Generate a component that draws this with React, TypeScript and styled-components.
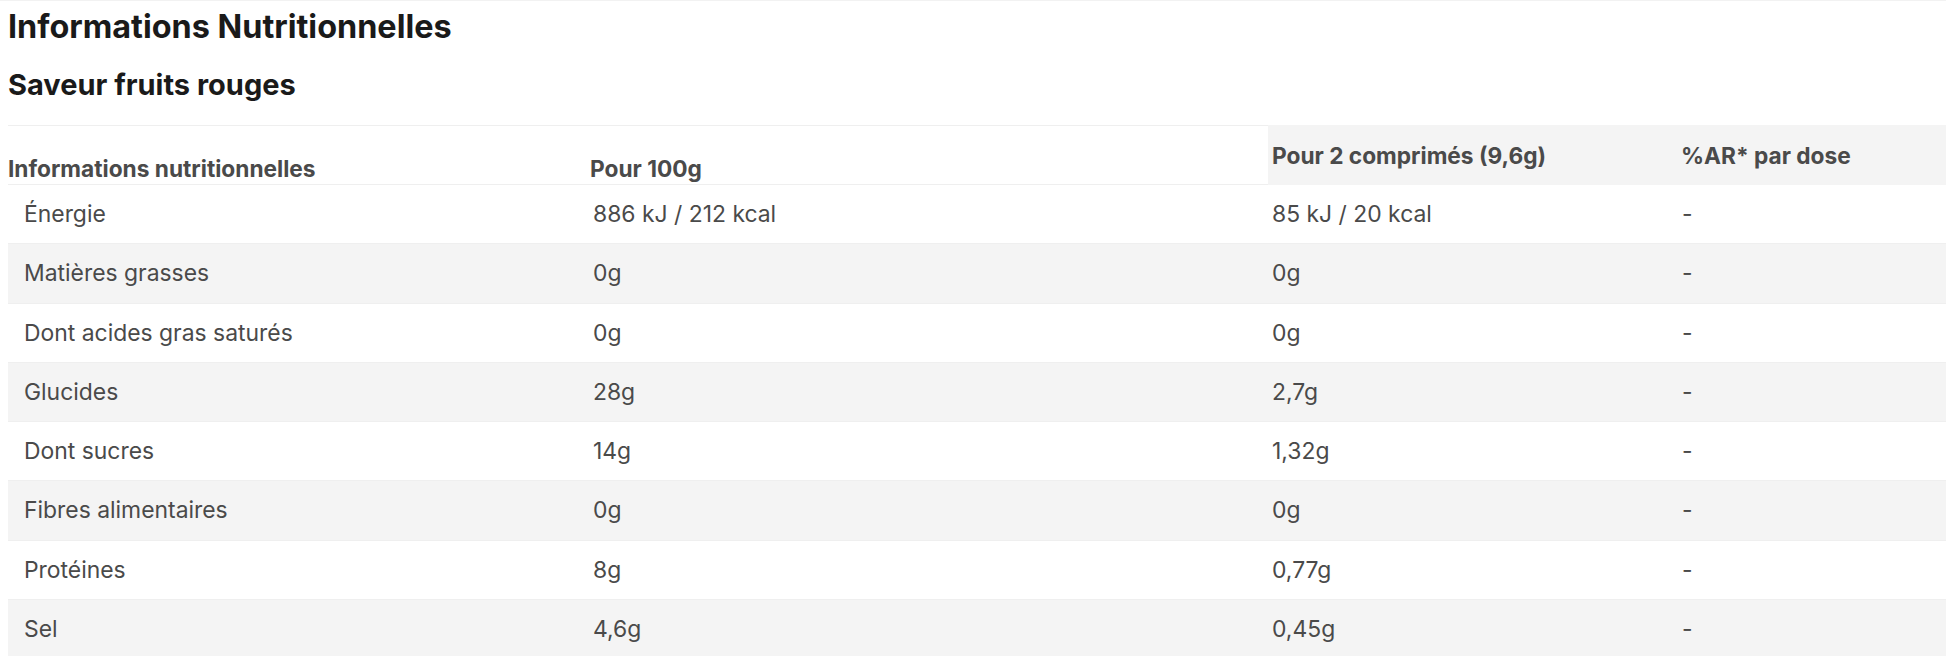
import React from "react";
import styled, { createGlobalStyle } from "styled-components";

const GlobalStyle = createGlobalStyle`
  html, body { margin: 0; padding: 0; background: #ffffff; }
  body { font-family: Inter, "Noto Sans", Arial, sans-serif; overflow-x: hidden; }
`;

const Page = styled.div`
  border-top: 1px solid #f2f2f2;
  padding: 8px 0 0 8px;
`;

const Title = styled.h1`
  margin: 0;
  font-size: 32.4px;
  line-height: 36px;
  font-weight: 700;
  color: #1a1a1a;
`;

const Subtitle = styled.h2`
  margin: 24px 0 0;
  font-size: 29px;
  line-height: 31px;
  font-weight: 700;
  color: #1a1a1a;
`;

const Table = styled.div`
  margin-top: 25px;
  display: flex;
  flex-direction: column;
`;

const HeadRow = styled.div`
  display: grid;
  grid-template-columns: 582px 678px 410px 1fr;
  height: 60px;
`;

const HeadCell = styled.div<{ $shaded?: boolean; $pad?: number }>`
  display: flex;
  align-items: ${(p) => (p.$shaded ? "center" : "flex-end")};
  padding: ${(p) => (p.$shaded ? "0" : "0 0 2px")};
  padding-left: ${(p) => p.$pad ?? 0}px;
  background: ${(p) => (p.$shaded ? "#f4f4f4" : "#ffffff")};
  border-top: 1px solid ${(p) => (p.$shaded ? "#f4f4f4" : "#efefef")};
  border-bottom: 1px solid ${(p) => (p.$shaded ? "#f4f4f4" : "#efefef")};
  font-size: 22.7px;
  font-weight: 700;
  color: #4a4a4a;
  white-space: nowrap;
`;

const Row = styled.div<{ $alt?: boolean }>`
  display: grid;
  grid-template-columns: 569px 679px 410px 1fr;
  height: 59.25px;
  box-sizing: border-box;
  border-bottom: 1px solid #efefef;
  background: ${(p) => (p.$alt ? "#f4f4f4" : "#ffffff")};
`;

const Cell = styled.div`
  display: flex;
  align-items: center;
  padding: 0 16px;
  font-size: 22.9px;
  font-weight: 400;
  color: #4a4a4a;
  white-space: nowrap;
`;

const rows: [string, string, string, string][] = [
  ["Énergie", "886 kJ / 212 kcal", "85 kJ / 20 kcal", "-"],
  ["Matières grasses", "0g", "0g", "-"],
  ["Dont acides gras saturés", "0g", "0g", "-"],
  ["Glucides", "28g", "2,7g", "-"],
  ["Dont sucres", "14g", "1,32g", "-"],
  ["Fibres alimentaires", "0g", "0g", "-"],
  ["Protéines", "8g", "0,77g", "-"],
  ["Sel", "4,6g", "0,45g", "-"],
];

export default function App() {
  return (
    <>
      <GlobalStyle />
      <Page>
        <Title>Informations Nutritionnelles</Title>
        <Subtitle>Saveur fruits rouges</Subtitle>
        <Table>
          <HeadRow>
            <HeadCell>Informations nutritionnelles</HeadCell>
            <HeadCell>Pour 100g</HeadCell>
            <HeadCell $shaded $pad={4}>Pour 2 comprimés (9,6g)</HeadCell>
            <HeadCell $shaded $pad={3}>%AR* par dose</HeadCell>
          </HeadRow>
          {rows.map((r, i) => (
            <Row key={r[0]} $alt={i % 2 === 1}>
              {r.map((c, j) => (
                <Cell key={j}>{c}</Cell>
              ))}
            </Row>
          ))}
        </Table>
      </Page>
    </>
  );
}
